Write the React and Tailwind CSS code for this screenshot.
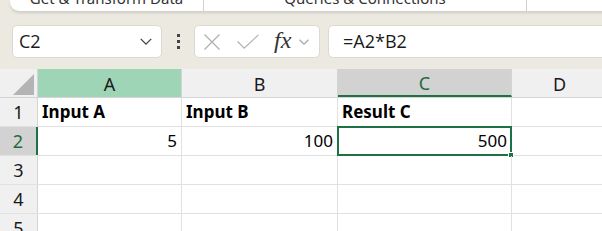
import React from "react";

const cols = [
  { key: "A", width: 144 },
  { key: "B", width: 156 },
  { key: "C", width: 174 },
  { key: "D", width: 96 },
];

const rows = [
  { n: 1, cells: { A: "Input A", B: "Input B", C: "Result C" }, bold: true },
  { n: 2, cells: { A: "5", B: "100", C: "500" } },
  { n: 3, cells: {} },
  { n: 4, cells: {} },
  { n: 5, cells: {} },
];

const Chevron = ({ className }) => (
  <svg viewBox="0 0 16 10" className={className} fill="none" stroke="currentColor" strokeWidth="1.6">
    <path d="M2 2 L8 8 L14 2" />
  </svg>
);

const App = () => {
  return (
    <div className="w-[602px] h-[231px] overflow-hidden bg-[#ece9e1] font-['Noto_Sans',sans-serif]">
      {/* ribbon edge */}
      <div className="h-[11px] ml-[10px] -mr-4 bg-white rounded-bl-[9px] shadow-[0_2px_3px_rgba(0,0,0,0.12)] flex overflow-hidden text-[15px] text-[#333]">
        <div className="w-[194px] shrink-0 border-r border-[#d0d0d0] flex justify-center">
          <span className="-mt-[12px] leading-5">Get &amp; Transform Data</span>
        </div>
        <div className="w-[323px] shrink-0 border-r border-[#d0d0d0] flex justify-center">
          <span className="-mt-[12px] leading-5">Queries &amp; Connections</span>
        </div>
      </div>

      {/* formula bar row */}
      <div className="flex items-center h-[33px] mt-[14px] pl-[12px]">
        <div className="w-[150px] shrink-0 h-full bg-white border border-[#dcd9d2] rounded-[5px] flex items-center justify-between pl-[6px] pr-[8px]">
          <span className="text-[18px] text-[#1a1a1a] font-['Open_Sans',sans-serif]">C2</span>
          <Chevron className="w-[14px] h-[9px] text-[#444]" />
        </div>
        <div className="w-[32px] shrink-0 flex flex-col items-center gap-[3px]">
          <span className="w-[3px] h-[3px] bg-[#444]" />
          <span className="w-[3px] h-[3px] bg-[#444]" />
          <span className="w-[3px] h-[3px] bg-[#444]" />
        </div>
        <div className="w-[126px] shrink-0 h-full bg-white border border-[#dcd9d2] rounded-[5px] flex items-center pl-[8px]">
          <svg viewBox="0 0 18 18" className="w-[18px] h-[18px]" fill="none" stroke="#b0b0b0" strokeWidth="1.3">
            <path d="M1.5 1.5 L16.5 16.5 M16.5 1.5 L1.5 16.5" />
          </svg>
          <svg viewBox="0 0 24 18" className="w-[24px] h-[17px] ml-[15px]" fill="none" stroke="#b0b0b0" strokeWidth="1.3">
            <path d="M1 9 L8 16 L23 2" />
          </svg>
          <span className="ml-[14px] text-[24px] italic font-['Liberation_Serif',serif] text-[#333] leading-none -mt-[4px]">fx</span>
          <Chevron className="w-[12px] h-[8px] ml-[7px] text-[#a8a8a8]" />
        </div>
        <div className="flex-1 -mr-4 ml-[8px] h-full bg-white border border-[#dcd9d2] rounded-[5px] flex items-center pl-[14px]">
          <span className="text-[18px] text-[#1a1a1a] font-['Open_Sans',sans-serif]">=A2*B2</span>
        </div>
      </div>

      {/* sheet */}
      <div className="mt-[11px] bg-white">
        {/* column headers */}
        <div className="flex h-[29px] bg-[#f0f0f0] border-b border-[#d4d4d4] text-[18px] text-[#1a1a1a]">
          <div className="w-[38px] shrink-0 border-r border-[#d4d4d4] flex items-end justify-end pr-[3px] pb-[2px]">
            <svg viewBox="0 0 20 20" className="w-[21px] h-[21px]">
              <path d="M20 0 L20 20 L0 20 Z" fill="#b4b4b4" />
            </svg>
          </div>
          {cols.map((c) => (
            <div
              key={c.key}
              style={{ width: c.width }}
              className={
                "shrink-0 flex items-center justify-center border-r border-[#d4d4d4] pt-[3px] " +
                (c.key === "A"
                  ? "bg-[#9fd5b7]"
                  : c.key === "C"
                  ? "bg-[#d2d2d2] text-[#1e6b41] border-b-2 border-b-[#1e7145]"
                  : "")
              }
            >
              {c.key}
            </div>
          ))}
        </div>

        {rows.map((r) => (
          <div key={r.n} className="flex h-[29px] border-b border-[#e1e1e1]">
            <div
              className={
                "w-[38px] shrink-0 flex items-center justify-center text-[18px] border-r " +
                (r.n === 2
                  ? "bg-[#d2d2d2] text-[#1e6b41] border-r-2 border-r-[#1e7145]"
                  : "bg-[#f0f0f0] text-[#1a1a1a] border-[#d4d4d4]")
              }
            >
              {r.n}
            </div>
            {cols.map((c) => {
              const v = r.cells[c.key];
              const selected = r.n === 2 && c.key === "C";
              return (
                <div
                  key={c.key}
                  style={{ width: c.width }}
                  className={
                    "shrink-0 relative flex items-center border-r border-[#e1e1e1] text-[17px] text-black " +
                    (r.bold ? "font-bold justify-start pl-[4px]" : "justify-end pr-[4px]")
                  }
                >
                  {v}
                  {selected && (
                    <>
                      <div className="absolute -left-px -top-px -right-px -bottom-px border-2 border-[#1e7145]" />
                      <div className="absolute -right-[3px] -bottom-[3px] w-[6px] h-[6px] bg-[#1e7145] border border-white" />
                    </>
                  )}
                </div>
              );
            })}
          </div>
        ))}
      </div>
    </div>
  );
};

export default App;
